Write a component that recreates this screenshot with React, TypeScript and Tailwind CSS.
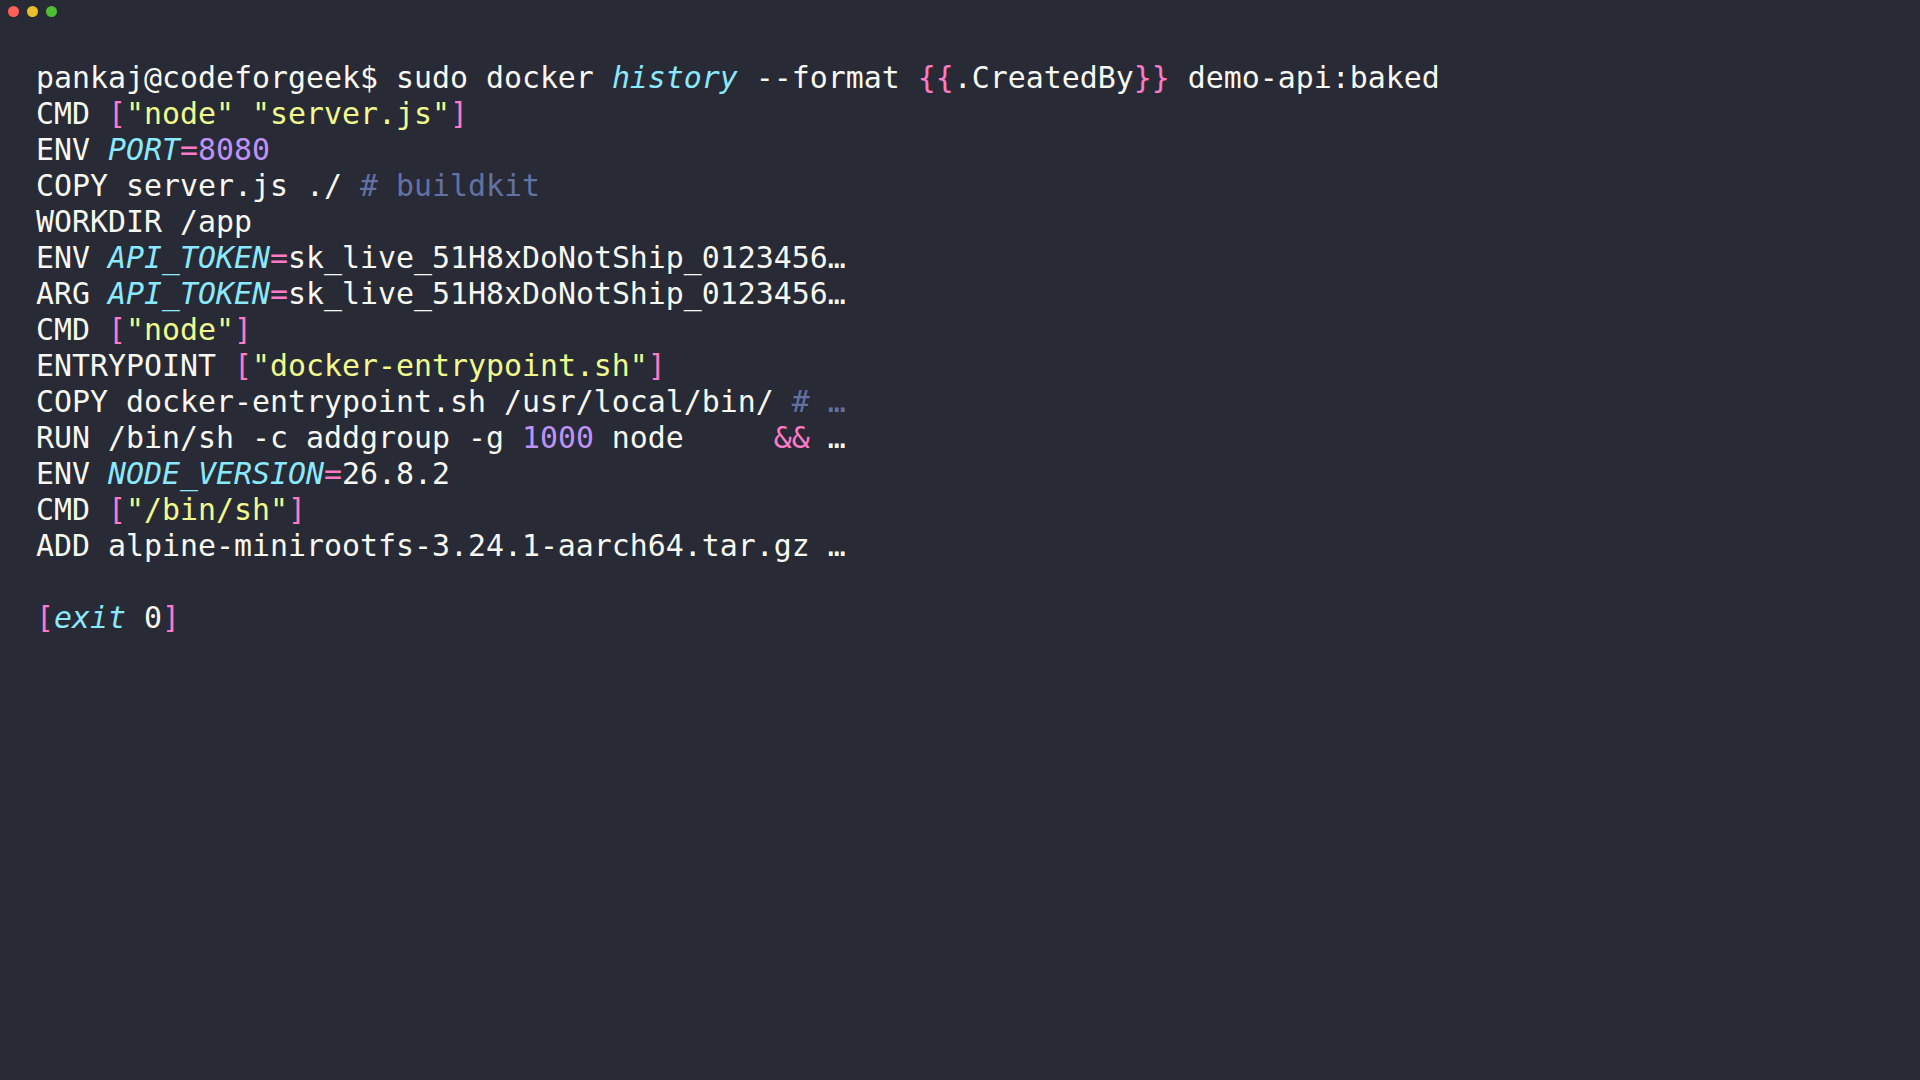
import React from "react";

const W = ({ children }: { children: React.ReactNode }) => <span className="text-[#f8f8f2]">{children}</span>;
const P = ({ children }: { children: React.ReactNode }) => <span className="text-[#ff79c6]">{children}</span>;
const Y = ({ children }: { children: React.ReactNode }) => <span className="text-[#f1fa8c]">{children}</span>;
const C = ({ children }: { children: React.ReactNode }) => <span className="text-[#8be9fd] italic">{children}</span>;
const N = ({ children }: { children: React.ReactNode }) => <span className="text-[#bd93f9]">{children}</span>;
const G = ({ children }: { children: React.ReactNode }) => <span className="text-[#6272a4]">{children}</span>;

const Line = ({ children }: { children?: React.ReactNode }) => (
  <div className="h-[36px] leading-[36px] whitespace-pre">{children}</div>
);

export default function App() {
  return (
    <div className="min-h-screen w-full bg-[#282a36] text-[#f8f8f2] font-['DejaVu_Sans_Mono',monospace] text-[29.9px]">
      <div className="flex items-center gap-[8px] pl-[8px] pt-[6px]">
        <span className="w-[11px] h-[11px] rounded-full bg-[#fe5f57]" />
        <span className="w-[11px] h-[11px] rounded-full bg-[#e8bf2b]" />
        <span className="w-[11px] h-[11px] rounded-full bg-[#4dc133]" />
      </div>
      <div className="pl-[36px] pt-[43px]">
        <Line>
          <W>pankaj@codeforgeek$ sudo docker </W>
          <C>history</C>
          <W> --format </W>
          <P>{"{{"}</P>
          <W>.CreatedBy</W>
          <P>{"}}"}</P>
          <W> demo-api:baked</W>
        </Line>
        <Line>
          <W>CMD </W><P>[</P><Y>"node" "server.js"</Y><P>]</P>
        </Line>
        <Line>
          <W>ENV </W><C>PORT</C><P>=</P><N>8080</N>
        </Line>
        <Line>
          <W>COPY server.js ./ </W><G># buildkit</G>
        </Line>
        <Line>
          <W>WORKDIR /app</W>
        </Line>
        <Line>
          <W>ENV </W><C>API_TOKEN</C><P>=</P><W>sk_live_51H8xDoNotShip_0123456…</W>
        </Line>
        <Line>
          <W>ARG </W><C>API_TOKEN</C><P>=</P><W>sk_live_51H8xDoNotShip_0123456…</W>
        </Line>
        <Line>
          <W>CMD </W><P>[</P><Y>"node"</Y><P>]</P>
        </Line>
        <Line>
          <W>ENTRYPOINT </W><P>[</P><Y>"docker-entrypoint.sh"</Y><P>]</P>
        </Line>
        <Line>
          <W>COPY docker-entrypoint.sh /usr/local/bin/ </W><G># …</G>
        </Line>
        <Line>
          <W>RUN /bin/sh -c addgroup -g </W><N>1000</N><W> node     </W><P>&&</P><W> …</W>
        </Line>
        <Line>
          <W>ENV </W><C>NODE_VERSION</C><P>=</P><W>26.8.2</W>
        </Line>
        <Line>
          <W>CMD </W><P>[</P><Y>"/bin/sh"</Y><P>]</P>
        </Line>
        <Line>
          <W>ADD alpine-minirootfs-3.24.1-aarch64.tar.gz …</W>
        </Line>
        <Line />
        <Line>
          <P>[</P><C>exit</C><W> 0</W><P>]</P>
        </Line>
      </div>
    </div>
  );
}
